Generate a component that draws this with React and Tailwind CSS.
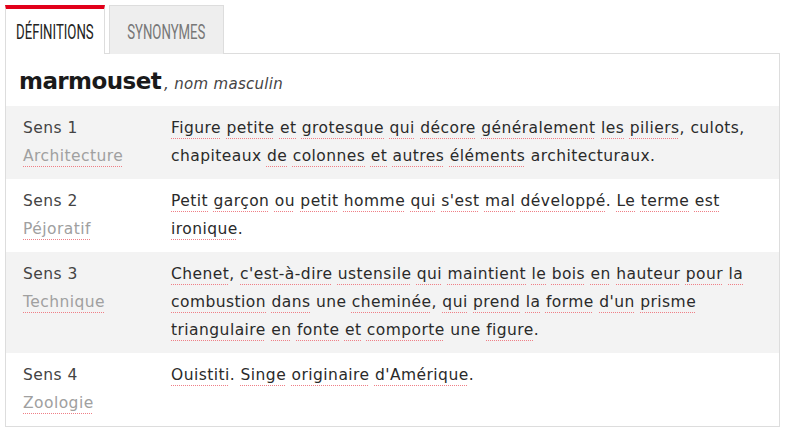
import React from "react";

const senses = [
  {
    n: 1,
    domain: "Architecture",
    text: "Figure petite et grotesque qui décore généralement les piliers, culots, chapiteaux de colonnes et autres éléments architecturaux.",
    plain: ["culots,", "chapiteaux", "architecturaux."],
    bg: "bg-[#f3f3f3]",
  },
  {
    n: 2,
    domain: "Péjoratif",
    text: "Petit garçon ou petit homme qui s'est mal développé. Le terme est ironique.",
    plain: [],
    bg: "bg-white",
  },
  {
    n: 3,
    domain: "Technique",
    text: "Chenet, c'est-à-dire ustensile qui maintient le bois en hauteur pour la combustion dans une cheminée, qui prend la forme d'un prisme triangulaire en fonte et comporte une figure.",
    plain: ["une"],
    bg: "bg-[#f3f3f3]",
  },
  {
    n: 4,
    domain: "Zoologie",
    text: "Ouistiti. Singe originaire d'Amérique.",
    plain: [],
    bg: "bg-white",
  },
];

const dotted =
  "underline decoration-dotted decoration-[#ef7f86] decoration-1 underline-offset-[5px]";

const tabFont = { fontFamily: "'Roboto', sans-serif" };

function Words({ text, plain }) {
  const words = text.split(" ");
  return words.map((w, i) => {
    const sep = i < words.length - 1 ? " " : "";
    if (plain.includes(w)) return <React.Fragment key={i}>{w + sep}</React.Fragment>;
    // keep trailing punctuation out of the underline
    const m = w.match(/^(.*?)([.,]?)$/);
    return (
      <React.Fragment key={i}>
        <span className={dotted}>{m[1]}</span>
        {m[2] + sep}
      </React.Fragment>
    );
  });
}

export default function App() {
  return (
    <div
      className="w-[802px] h-[436px] bg-white pt-[5px] pl-[5px] pr-[22px]"
      style={{ fontFamily: "'DejaVu Sans', sans-serif" }}
    >
      {/* Tabs */}
      <div className="flex h-[49px]">
        <div className="w-[100px] border-t-4 border-t-[#e2001a] border-x border-x-[#dddddd] bg-white flex items-center justify-center">
          <span className="inline-block text-[20px] text-[#222] scale-x-[0.66] whitespace-nowrap" style={tabFont}>
            DÉFINITIONS
          </span>
        </div>
        <div className="w-[4px] border-b border-[#dddddd]" />
        <div className="w-[115px] bg-[#eeeeee] border-t border-x border-[#dddddd] flex items-center justify-center pt-[3px]">
          <span className="inline-block text-[20px] text-[#777] scale-x-[0.66] whitespace-nowrap" style={tabFont}>
            SYNONYMES
          </span>
        </div>
        <div className="flex-1 border-b border-[#dddddd]" />
      </div>

      {/* Content */}
      <div className="border-x border-b border-[#dddddd]">
        <div className="h-[52px] flex items-center px-[13px] pt-[2px]">
          <span className="text-[23px] font-bold text-[#1a1a1a] tracking-tight">marmouset</span>
          <span className="text-[15px] italic text-[#444] ml-[3px] mt-[6px] tracking-[0.3px]">, nom masculin</span>
        </div>

        {senses.map((s) => (
          <div
            key={s.n}
            className={`grid grid-cols-[165px_1fr] pt-2 pb-[9px] text-[15.5px] tracking-[0.45px] leading-[28px] ${s.bg}`}
          >
            <div className="pl-[17px]">
              <div className="text-[#444]">Sens {s.n}</div>
              <div>
                <span className={`${dotted} text-[#a0a0a0]`}>{s.domain}</span>
              </div>
            </div>
            <div className="pr-[20px] text-[#2a2a2a]">
              <Words text={s.text} plain={s.plain} />
            </div>
          </div>
        ))}
      </div>
    </div>
  );
}
